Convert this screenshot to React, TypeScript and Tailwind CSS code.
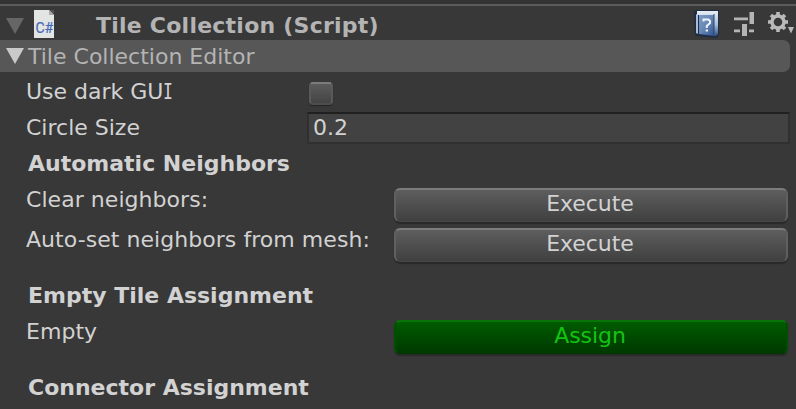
import type { ReactNode } from 'react';

function Triangle({ className }: { className: string }) {
  return (
    <svg className={className} width="20" height="18" viewBox="0 0 20 18">
      <path d="M1 1H19L10 17Z" fill="currentColor" />
    </svg>
  );
}

function ScriptIcon() {
  return (
    <svg className="ml-[9px] h-7 w-5 shrink-0" viewBox="0 0 20 28">
      <path d="M0 0H15L20 5V28H0Z" fill="#e3e4e4" />
      <path d="M15 0V5H20Z" fill="#a9a9a9" />
      <path d="M16 0H20V4Z" fill="#555" />
      <text x="1.4" y="23" fontFamily="Roboto, sans-serif" fontSize="14.5" fill="#4468b4" stroke="#4468b4" strokeWidth="0.2" textLength="17.8" lengthAdjust="spacingAndGlyphs">C#</text>
    </svg>
  );
}

function HelpIcon() {
  return (
    <svg className="h-7 w-[26px]" viewBox="0 0 26 28">
      <defs>
        <linearGradient id="cover" x1="0" y1="0" x2="1" y2="1">
          <stop offset="0" stopColor="#7f9fc8" />
          <stop offset="0.5" stopColor="#6585b4" />
          <stop offset="1" stopColor="#2e5290" />
        </linearGradient>
        <linearGradient id="pages" x1="0" y1="0" x2="0" y2="1">
          <stop offset="0" stopColor="#e8eef5" />
          <stop offset="0.55" stopColor="#a9bdd8" />
          <stop offset="1" stopColor="#31507f" />
        </linearGradient>
      </defs>
      <path d="M0 2L3 0H25V24L23 28L2 26L1 24Z" fill="#1f2d43" />
      <path d="M3 1H24V24L22 26H20V5H3Z" fill="url(#pages)" />
      <path d="M2 4L4 5V24L2 23Z" fill="#a8bcd7" />
      <path d="M5 5H20V26L5 24Z" fill="url(#cover)" />
      <path d="M20 4V25" stroke="#294672" strokeWidth="1" />
      <path d="M9.5 11.5V9.5H14.5L16 11V13L12.8 16V18" fill="none" stroke="#edf3fa" strokeWidth="2" />
      <rect x="11.7" y="19.5" width="2.3" height="2" fill="#edf3fa" />
    </svg>
  );
}

function PresetIcon() {
  return (
    <svg className="ml-[14px] h-6 w-5" viewBox="0 0 20 24" fill="#b4b4b4">
      <path d="M0 5.6H14V8.2H0Z M15.5 0H20V12H15.5Z M0 17.6H6V20.2H0Z M8 12H13V24H8Z M15 17.6H20V20.2H15Z" />
    </svg>
  );
}

function GearIcon() {
  return (
    <svg className="ml-[14px] h-[22px] w-[26px]" viewBox="0 0 26 22">
      <circle cx="10" cy="10" r="6" fill="none" stroke="#b9b9b9" strokeWidth="3.4" />
      <g stroke="#b9b9b9" strokeWidth="3.6">
        <path d="M10 0V4M10 16V20M0 10H4M16 10H20M3 3L5.6 5.6M14.4 14.4L17 17M3 17L5.6 14.4M14.4 5.6L17 3" />
      </g>
      <path d="M20 15H26L23 21.5Z" fill="#b9b9b9" />
    </svg>
  );
}

function Heading({ children }: { children: ReactNode }) {
  return <h2 className="h-9 pl-7 font-bold leading-[38px]">{children}</h2>;
}

function ActionRow({ label, action, green = false, className }: { label: string; action: string; green?: boolean; className: string }) {
  return (
    <div className={`flex items-start pr-2 pl-[26px] ${className}`}>
      <span className="w-[368px] shrink-0 leading-[38px] tracking-[0.05px]">{label}</span>
      <button
        className={`mt-[7px] h-[34px] flex-1 rounded-[6px] border-t-2 border-x-2 border-b bg-linear-to-b pr-[2px] pb-[3px] text-center leading-[28px] tracking-[-0.05px] ${
          green
            ? 'border-x-[#004f00] border-t-[#087508] border-b-[#003600] from-[#005c00] to-[#003900] text-[#14c314] shadow-[0_2px_1px_#2a2a2a]'
            : 'border-x-[#606060] border-t-[#7c7c7c] border-b-[#454545] from-[#5e5e5e] to-[#404040] text-[#d2d2d2] shadow-[0_2px_1px_#292929]'
        }`}
      >
        {action}
      </button>
    </div>
  );
}

export default function App() {
  return (
    <main className="h-[409px] w-[796px] overflow-hidden bg-[#383838] font-['DejaVu_Sans',sans-serif] text-[22px] whitespace-nowrap text-[#d2d2d2]">
      <header className="flex h-10 items-start border-t-4 border-[#333]">
        <div className="flex h-9 w-full items-start border-t-2 border-[#5c5c5c] pl-[5px]">
          <Triangle className="mt-[11px] shrink-0 text-[#666]" />
          <div className="mt-1">
            <ScriptIcon />
          </div>
          <h1 className="mt-[3px] ml-[42px] flex-1 leading-[34px] font-bold tracking-[0.24px] text-[#b4b4b4]">Tile Collection (Script)</h1>
          <div className="mt-1 flex items-start">
            <HelpIcon />
            <div className="mt-[2px]"><PresetIcon /></div>
            <div className="mt-[2px]"><GearIcon /></div>
          </div>
          <div className="w-[2px]" />
        </div>
      </header>
      <section className="mr-[6px] flex h-8 items-start rounded-r-[7px] bg-[#575757] pl-[5px] text-[#b4b4b4]">
        <Triangle className="mt-[7px] shrink-0 text-[#cacaca]" />
        <span className="ml-[3px] leading-[34px]">Tile Collection Editor</span>
      </section>
      <div className="mt-px flex h-9 pl-[26px]">
        <span className="w-[283px] leading-[38px]">
          Use dark GU<span className="inline-block origin-left scale-x-75 font-['DejaVu_Sans_Mono',monospace]">I</span>
        </span>
        <span className="mt-[9px] h-[23px] w-6 rounded-[4px] border-2 border-x-[#5a5a5a] border-t-[#7c7c7c] border-b-[#4d4d4d] bg-linear-to-b from-[#5c5c5c] to-[#444] shadow-[0_1px_1px_#252525]" />
      </div>
      <div className="flex h-9 pl-[26px]">
        <span className="w-[281px] leading-[38px]">Circle Size</span>
        <span className="mt-[3px] h-8 w-[483px] border-2 border-[#303030] border-t-[#202020] bg-[#424242] pl-1 leading-[28px]">0.2</span>
      </div>
      <Heading>Automatic Neighbors</Heading>
      <ActionRow label="Clear neighbors:" action="Execute" className="h-10" />
      <ActionRow label="Auto-set neighbors from mesh:" action="Execute" className="h-14" />
      <Heading>Empty Tile Assignment</Heading>
      <ActionRow label="Empty" action="Assign" green className="h-14" />
      <Heading>Connector Assignment</Heading>
    </main>
  );
}
